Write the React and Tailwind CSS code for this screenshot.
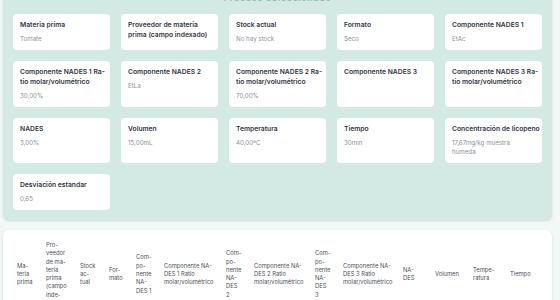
const fields = [
  { label: ["Materia prima"], value: ["Tomate"] },
  { label: ["Proveedor de materia", "prima (campo indexado)"], value: [] },
  { label: ["Stock actual"], value: ["No hay stock"] },
  { label: ["Formato"], value: ["Seco"] },
  { label: ["Componente NADES 1"], value: ["EtAc"] },
  { label: ["Componente NADES 1 Ra-", "tio molar/volumétrico"], value: ["30,00%"] },
  { label: ["Componente NADES 2"], value: ["EtLa"] },
  { label: ["Componente NADES 2 Ra-", "tio molar/volumétrico"], value: ["70,00%"] },
  { label: ["Componente NADES 3"], value: [] },
  { label: ["Componente NADES 3 Ra-", "tio molar/volumétrico"], value: [] },
  { label: ["NADES"], value: ["3,00%"] },
  { label: ["Volumen"], value: ["15,00mL"] },
  { label: ["Temperatura"], value: ["40,00ºC"] },
  { label: ["Tiempo"], value: ["30min"] },
  { label: ["Concentración de licopeno"], value: ["17,67mg/kg muestra", "húmeda"] },
  { label: ["Desviación estandar"], value: ["0,65"] },
];

const columns = [
  { w: "w-[29px]", lines: ["Ma-", "teria", "prima"] },
  { w: "w-[34px]", lines: ["Pro-", "veedor", "de ma-", "teria", "prima", "(campo", "inde-", "xado)"] },
  { w: "w-[29px]", lines: ["Stock", "ac-", "tual"] },
  { w: "w-[27px]", lines: ["For-", "mato"] },
  { w: "w-[28px]", lines: ["Com-", "po-", "nente", "NA-", "DES 1"] },
  { w: "w-[62px]", lines: ["Componente NA-", "DES 1 Ratio", "molar/volumétrico"] },
  { w: "w-[28px]", lines: ["Com-", "po-", "nente", "NA-", "DES", "2"] },
  { w: "w-[61px]", lines: ["Componente NA-", "DES 2 Ratio", "molar/volumétrico"] },
  { w: "w-[28px]", lines: ["Com-", "po-", "nente", "NA-", "DES", "3"] },
  { w: "w-[60px]", lines: ["Componente NA-", "DES 3 Ratio", "molar/volumétrico"] },
  { w: "w-[32px]", lines: ["NA-", "DES"] },
  { w: "w-[38px]", lines: ["Volumen"] },
  { w: "w-[37px]", lines: ["Tempe-", "ratura"] },
  { w: "w-[36px]", lines: ["Tiempo"] },
];

const FieldCard = ({ label, value }) => (
  <div className="bg-white rounded-[4px] px-[7px] pt-[6px] pb-[7px]">
    <div className="text-[6.75px] leading-[10px] font-semibold text-[#30353f] whitespace-nowrap">
      {label.map((l, i) => (
        <div key={i}>{l}</div>
      ))}
    </div>
    {value.length > 0 && (
      <div className="mt-[4px] text-[6.2px] leading-[9px] text-[#8b9099] whitespace-nowrap">
        {value.map((v, i) => (
          <div key={i}>{v}</div>
        ))}
      </div>
    )}
  </div>
);

export default function App() {
  return (
    <div
      className="min-h-screen bg-[#f2f8f6] pl-[3px] pr-[8px] overflow-hidden"
      style={{ fontFamily: "Inter, 'Noto Sans', sans-serif" }}
    >
      {/* selected process panel, scrolled so its top is out of view */}
      <div className="-mt-[20px] bg-[#d3e9e3] rounded-[6px] px-[10px] pt-[12px] pb-[10px] shadow-sm">
        <h2 className="text-center text-[9px] leading-[11px] font-semibold tracking-[0.6px] text-[#a3b3ae] mb-[11px]">
          Proceso seleccionado
        </h2>
        <div className="grid grid-cols-5 gap-[11px]">
          {fields.map((f, i) => (
            <FieldCard key={i} label={f.label} value={f.value} />
          ))}
        </div>
      </div>

      <div className="mt-[10px] bg-white rounded-[6px] shadow-sm pl-[14px] overflow-hidden">
        <table className="table-fixed border-collapse">
          <thead>
            <tr>
              {columns.map((c, i) => (
                <th
                  key={i}
                  className={`${c.w} p-0 pt-[11px] pb-[11px] text-left align-middle font-normal text-[5.8px] leading-[8.3px] text-[#4a4f57] whitespace-nowrap`}
                >
                  {c.lines.map((l, j) => (
                    <div key={j}>{l}</div>
                  ))}
                </th>
              ))}
            </tr>
          </thead>
          <tbody>
            <tr>
              {columns.map((c, i) => (
                <td key={i} className="py-[8px] text-[5.8px] text-[#4a4f57]"></td>
              ))}
            </tr>
          </tbody>
        </table>
      </div>
    </div>
  );
}
